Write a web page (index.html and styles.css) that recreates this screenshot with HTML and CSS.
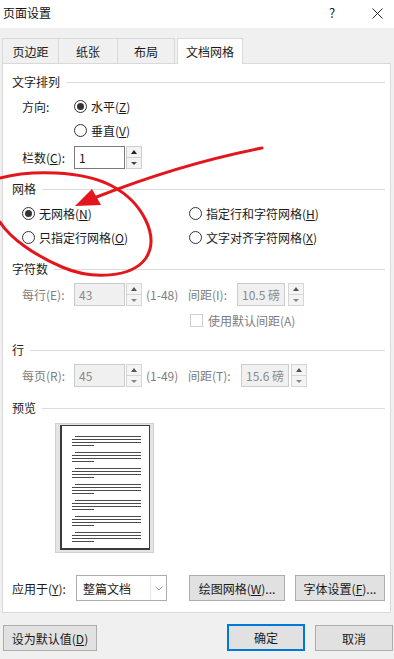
FILE: index.html
```html
<!DOCTYPE html>
<html lang="zh-CN">
<head>
<meta charset="utf-8">
<title>页面设置</title>
<link rel="stylesheet" href="styles.css">
</head>
<body>
<div class="window">
  <div class="titlebar">
    <span class="title">页面设置</span>
    <span class="help">?</span>
    <span class="close"><svg width="11" height="11" viewBox="0 0 11 11"><path d="M0.5 0.5 L10.5 10.5 M10.5 0.5 L0.5 10.5" stroke="#222" stroke-width="1"/></svg></span>
  </div>
  <div class="tabs">
    <div class="tab t1">页边距</div>
    <div class="tab t2">纸张</div>
    <div class="tab t3">布局</div>
    <div class="tab active">文档网格</div>
  </div>
  <div class="panel">
    <div class="group-title g1">文字排列</div>
    <div class="row r-dir">
      <span class="lbl w52">方向:</span>
      <span class="radio checked"></span><span class="rtext">水平(<u>Z</u>)</span>
    </div>
    <div class="row r-dir2">
      <span class="lbl w52"></span>
      <span class="radio"></span><span class="rtext">垂直(<u>V</u>)</span>
    </div>
    <div class="row r-cols">
      <span class="lbl w52">栏数(<u>C</u>):</span>
      <span class="input">1</span>
      <span class="spin"><span class="sb up"></span><span class="sb down"></span></span>
    </div>

    <div class="group-title g2">网格</div>
    <div class="row r-grid">
      <span class="col-left"><span class="radio checked"></span><span class="rtext">无网格(<u>N</u>)</span></span>
      <span class="radio"></span><span class="rtext">指定行和字符网格(<u>H</u>)</span>
    </div>
    <div class="row r-grid2">
      <span class="col-left"><span class="radio"></span><span class="rtext">只指定行网格(<u>O</u>)</span></span>
      <span class="radio"></span><span class="rtext">文字对齐字符网格(<u>X</u>)</span>
    </div>

    <div class="group-title g3">字符数</div>
    <div class="row r-num dis">
      <span class="part1">
        <span class="lbl w52">每行(E):</span>
        <span class="input dis-in">43</span>
        <span class="spin dis-spin"><span class="sb up"></span><span class="sb down"></span></span>
        <span class="range">(1-48)</span>
      </span>
      <span class="lbl w49">间距(I):</span>
      <span class="input dis-in w48">10.5 磅</span>
      <span class="spin dis-spin gap3"><span class="sb up"></span><span class="sb down"></span></span>
    </div>
    <div class="row r-check dis">
      <span class="checkbox"></span><span class="ctext">使用默认间距(A)</span>
    </div>

    <div class="group-title g4">行</div>
    <div class="row r-num2 dis">
      <span class="part1">
        <span class="lbl w52">每页(R):</span>
        <span class="input dis-in">45</span>
        <span class="spin dis-spin"><span class="sb up"></span><span class="sb down"></span></span>
        <span class="range">(1-49)</span>
      </span>
      <span class="lbl w53">间距(T):</span>
      <span class="input dis-in w48">15.6 磅</span>
      <span class="spin dis-spin gap2"><span class="sb up"></span><span class="sb down"></span></span>
    </div>

    <div class="group-title g5">预览</div>
    <div class="preview">
      <div class="page">
        <svg width="89" height="123" viewBox="0 0 89 123">
          <g stroke="#4a4a4a" stroke-width="1">
            <g id="grp">
              <path d="M13 10.5 H79 M10 13.5 H79 M10 16.5 H79 M10 19.5 H32"/>
            </g>
            <use href="#grp" y="16"/>
            <use href="#grp" y="32"/>
            <use href="#grp" y="48"/>
            <use href="#grp" y="64"/>
            <use href="#grp" y="80"/>
            <use href="#grp" y="96"/>
          </g>
        </svg>
      </div>
    </div>

    <div class="row r-apply">
      <span class="lbl w64">应用于(<u>Y</u>):</span>
      <span class="select"><span class="sel-text">整篇文档</span><span class="sel-arrow"><svg width="8" height="5" viewBox="0 0 8 5"><path d="M0.5 0.5 L4 4 L7.5 0.5" fill="none" stroke="#9a9a9a" stroke-width="1"/></svg></span></span>
      <span class="btn b-draw">绘图网格(<u>W</u>)...</span>
      <span class="btn b-font">字体设置(<u>F</u>)...</span>
    </div>
  </div>
  <div class="footer">
    <span class="btn b-default">设为默认值(<u>D</u>)</span>
    <span class="btn b-ok">确定</span>
    <span class="btn b-cancel">取消</span>
  </div>

  <svg class="annot" width="394" height="659" viewBox="0 0 394 659">
    <g fill="none" stroke="#e3161c" stroke-width="3" stroke-linecap="round">
      <path d="M0 178 C 30 170, 82 170, 112 186 C 142 202, 160 236, 146 258 C 132 278, 92 280, 62 267 C 34 255, 10 238, 0 222"/>
      <path d="M262 148 Q 180 164 94 198"/>
    </g>
    <polygon points="75,206 92,189 101,205" fill="#e3161c"/>
  </svg>
</div>
</body>
</html>
```
FILE: styles.css
```css
* { box-sizing: border-box; }
html, body { margin: 0; padding: 0; }
body {
  width: 394px;
  height: 659px;
  background: #f0f0f0;
  font-family: "Noto Sans CJK SC", "Microsoft YaHei", sans-serif;
  font-size: 12px;
  color: #1a1a1a;
  overflow: hidden;
}
.window { position: relative; width: 394px; height: 659px; }
u { text-decoration: underline; text-underline-offset: 1px; }

.titlebar {
  height: 28px;
  background: #ffffff;
  display: flex;
  align-items: center;
  padding-left: 3px;
}
.title { font-size: 12px; color: #111; flex: 1; line-height: 1; margin-top: -3px; }
.help { font-size: 13px; color: #222; width: 10px; margin-right: 33px; margin-top: -3px; }
.close { width: 11px; height: 11px; margin-right: 11px; display: flex; margin-top: -2px; }

.tabs {
  height: 35px;
  display: flex;
  align-items: flex-end;
  padding-left: 2px;
}
.tab {
  height: 25px;
  display: flex;
  align-items: center;
  justify-content: center;
  border: 1px solid #d9d9d9;
  border-bottom: none;
  border-right: none;
  color: #1a1a1a;
  background: #f0f0f0;
}
.t1 { width: 56px; }
.t2 { width: 59px; }
.t3 { width: 58px; border-right: 1px solid #d9d9d9; }
.tab.active {
  width: 66px;
  height: 26px;
  margin-left: 2px;
  background: #ffffff;
  border: 1px solid #d9d9d9;
  border-bottom: none;
  margin-bottom: -1px;
  position: relative;
  z-index: 1;
}

.panel {
  margin: 0 3px 0 2px;
  height: 550px;
  background: #ffffff;
  border: 1px solid #d9d9d9;
  padding: 8px 5px 0 9px;
}

.group-title {
  height: 18px;
  display: flex;
  align-items: center;
  color: #222;
}
.group-title::after {
  content: "";
  flex: 1;
  height: 1px;
  background: #dcdcdc;
  margin-left: 6px;
  margin-top: 3px;
}
.g2 { margin-top: 10px; }
.g3 { margin-top: 10px; }
.g4 { margin-top: 11px; }
.g5 { margin-top: 11px; }

.row {
  display: flex;
  align-items: center;
  padding-left: 10px;
}
.r-dir { height: 24px; margin-top: 4px; }
.r-dir2 { height: 24px; }
.r-cols { height: 23px; margin-top: 4px; }
.r-grid { height: 24px; margin-top: 4px; }
.r-grid2 { height: 24px; }
.r-num { height: 23px; margin-top: 6px; }
.r-check { height: 18px; margin-top: 5px; padding-left: 178px; }
.r-num2 { height: 23px; margin-top: 6px; }
.r-apply { height: 26px; margin-top: 22px; padding-left: 0; }

.lbl { flex: none; white-space: nowrap; }
.w52 { width: 52px; }
.w49 { width: 49px; }
.w53 { width: 53px; }
.w64 { width: 64px; }

.radio {
  flex: none;
  width: 13px;
  height: 13px;
  border: 1px solid #333;
  border-radius: 50%;
  display: flex;
  align-items: center;
  justify-content: center;
  background: #fff;
}
.radio.checked::after {
  content: "";
  width: 7px;
  height: 7px;
  border-radius: 50%;
  background: #333;
}
.rtext { margin-left: 4px; white-space: nowrap; }
.col-left { width: 167px; display: flex; align-items: center; flex: none; }

.input {
  flex: none;
  width: 51px;
  height: 23px;
  border: 1px solid #7a7a7a;
  padding-left: 4px;
  display: flex;
  align-items: center;
  color: #1a1a1a;
  background: #fff;
}
.input.w48 { width: 48px; }
.dis-in {
  border-color: #cccccc;
  background: #f0f0f0;
  color: #8a8a8a;
}
.spin {
  flex: none;
  width: 16px;
  height: 23px;
  margin-left: 1px;
  display: flex;
  flex-direction: column;
}
.spin.gap3 { margin-left: 3px; }
.spin.gap2 { margin-left: 2px; }
.sb {
  flex: 1;
  border: 1px solid #cfcfcf;
  background: #f3f3f3;
  display: flex;
  align-items: center;
  justify-content: center;
}
.sb.down { border-top: none; }
.sb.up::after {
  content: "";
  border-left: 3.5px solid transparent;
  border-right: 3.5px solid transparent;
  border-bottom: 4px solid #222;
}
.sb.down::after {
  content: "";
  border-left: 3px solid transparent;
  border-right: 3px solid transparent;
  border-top: 3px solid #444;
}
.dis-spin .sb { border-color: #d6d6d6; background: #f4f4f4; }
.dis-spin .sb.up::after { border-bottom-color: #555; }
.dis-spin .sb.down::after { border-top-color: #888; }

.dis { color: #7d7d7d; }
.part1 { width: 166px; display: flex; align-items: center; flex: none; }
.range { margin-left: 4px; white-space: nowrap; }

.checkbox {
  flex: none;
  width: 13px;
  height: 13px;
  border: 1px solid #cfcfcf;
  background: #fff;
}
.ctext { margin-left: 5px; white-space: nowrap; }

.preview {
  margin-top: 7px;
  margin-left: 43px;
  width: 99px;
  height: 130px;
  background: #e4e4e4;
  border: 1px solid #d0d0d0;
  padding: 1px 4px 3px 4px;
}
.page {
  width: 90px;
  height: 125px;
  background: #fff;
  border: 1px solid #3a3a3a;
  border-width: 1px 1px 2px 2px;
}
.page svg { display: block; }

.select {
  flex: none;
  width: 91px;
  height: 26px;
  border: 1px solid #adadad;
  background: #fff;
  display: flex;
  align-items: center;
}
.sel-text { flex: 1; padding-left: 6px; color: #1a1a1a; }
.sel-arrow {
  width: 16px;
  height: 24px;
  border-left: 1px solid #e6e6e6;
  display: flex;
  align-items: center;
  justify-content: center;
}

.btn {
  flex: none;
  height: 26px;
  background: #e1e1e1;
  border: 1px solid #adadad;
  display: flex;
  align-items: center;
  justify-content: center;
  white-space: nowrap;
  color: #1a1a1a;
}
.b-draw { width: 96px; margin-left: 22px; }
.b-font { width: 90px; margin-left: 10px; }

.footer {
  display: flex;
  align-items: flex-start;
  padding-top: 12px;
  padding-left: 3px;
}
.b-default { width: 94px; }
.b-ok { width: 78px; height: 27px; margin-left: 130px; border: 2px solid #0078d7; margin-top: -1px; }
.b-cancel { width: 78px; margin-left: 10px; }

.annot {
  position: absolute;
  left: 0;
  top: 0;
  pointer-events: none;
}
```
